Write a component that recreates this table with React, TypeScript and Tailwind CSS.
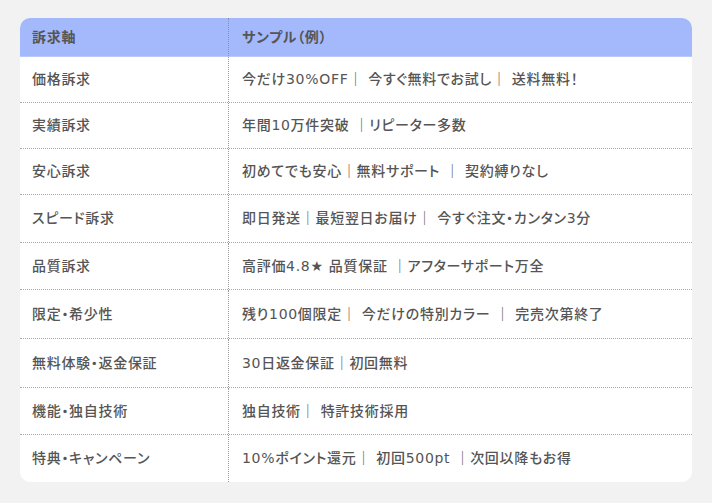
const rows: [string, string, string][] = [
  ["価格訴求", "今だけ30%OFF｜ 今すぐ無料でお試し｜ 送料無料！", "h-[45px]"],
  ["実績訴求", "年間10万件突破 ｜リピーター多数", "h-[46px]"],
  ["安心訴求", "初めてでも安心｜無料サポート ｜ 契約縛りなし", "h-[46px]"],
  ["スピード訴求", "即日発送｜最短翌日お届け｜ 今すぐ注文・カンタン3分", "h-[48px]"],
  ["品質訴求", "高評価4.8★ 品質保証 ｜アフターサポート万全", "h-[47px]"],
  ["限定・希少性", "残り100個限定｜ 今だけの特別カラー ｜ 完売次第終了", "h-[49px]"],
  ["無料体験・返金保証", "30日返金保証｜初回無料", "h-[49px]"],
  ["機能・独自技術", "独自技術｜ 特許技術採用", "h-[47px]"],
  ["特典・キャンペーン", "10%ポイント還元｜ 初回500pt ｜次回以降もお得", "h-[48px]"],
];

export default function App() {
  return (
    <div
      className="w-[712px] h-[503px] bg-[#f2f2f2] pt-[18px] px-5"
      style={{
        fontFamily: '"DejaVu Sans", "Noto Sans CJK JP", sans-serif',
        fontFeatureSettings: '"palt"',
      }}
    >
      <div className="rounded-[10px] bg-white overflow-hidden text-[14px] text-[#555] tracking-[0.05em]">
        <div className="flex h-[39px] bg-[#a3b9fc] font-bold border-b border-[#b8c9fd]">
          <div className="w-[209px] shrink-0 flex items-center pl-3 border-r border-dotted border-[#8a8fa0]">
            訴求軸
          </div>
          <div className="flex-1 flex items-center pl-[13px]">サンプル（例）</div>
        </div>
        {rows.map(([k, v, h], i) => (
          <div
            key={k}
            className={`flex font-medium ${h} ${i > 0 ? "border-t border-dotted border-[#aaa]" : ""}`}
          >
            <div className="w-[209px] shrink-0 flex items-center pl-3 border-r border-dotted border-[#999]">
              {k}
            </div>
            <div className="flex-1 flex items-center pl-[13px] whitespace-pre">{v}</div>
          </div>
        ))}
      </div>
    </div>
  );
}
